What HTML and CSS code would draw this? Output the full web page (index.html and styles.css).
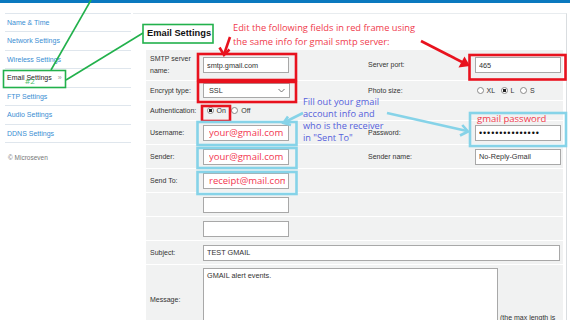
FILE: index.html
```html
<!DOCTYPE html>
<html lang="en">
<head>
  <meta charset="UTF-8">
  <meta name="viewport" content="width=device-width, initial-scale=1.0">
  <title>Email Settings</title>
  <link rel="stylesheet" href="styles.css">
</head>
<body>

  <div class="topbar"></div>

  <div class="page">
    <!-- left menu -->
    <div class="sidebar">
      <ul class="nav">
        <li>Name &amp; Time</li>
        <li>Network Settings</li>
        <li>Wireless Settings</li>
        <li class="active">Email Settings <span class="raquo">&raquo;</span></li>
        <li>FTP Settings</li>
        <li>Audio Settings</li>
        <li>DDNS Settings</li>
      </ul>
      <p class="copy">&copy; Microseven</p>
    </div>

    <!-- settings form -->
    <div class="main">
      <h2>Email Settings</h2>
      <table class="form">
        <colgroup>
          <col style="width:54px">
          <col style="width:165px">
          <col style="width:105px">
          <col style="width:93px">
        </colgroup>
        <tr class="r-smtp">
          <td class="lab">SMTP server name:</td>
          <td class="val"><input class="txt" value="smtp.gmail.com"></td>
          <td class="lab2">Server port:</td>
          <td class="val2"><input class="txt" value="465"></td>
        </tr>
        <tr class="r-20">
          <td class="lab">Encrypt type:</td>
          <td class="val">
            <div class="sel">SSL
              <svg width="7" height="5" viewBox="0 0 7 5"><path d="M0.5 1 L3.5 4 L6.5 1" fill="none" stroke="#666" stroke-width="0.9"/></svg>
            </div>
          </td>
          <td class="lab2">Photo size:</td>
          <td class="val2 radios">
            <span class="radio"></span><span class="opt">XL</span>
            <span class="radio on"></span><span class="opt">L</span>
            <span class="radio"></span><span class="opt">S</span>
          </td>
        </tr>
        <tr class="r-20">
          <td class="lab">Authentication:</td>
          <td class="val radios auth" colspan="3">
            <span class="radio on"></span><span class="opt">On</span>
            <span class="radio"></span><span class="opt">Off</span>
          </td>
        </tr>
        <tr class="r-24">
          <td class="lab">Username:</td>
          <td class="val"><input class="txt mine" value="your@gmail.com"></td>
          <td class="lab2">Password:</td>
          <td class="val2"><input class="txt dots" value="•••••••••••••••"></td>
        </tr>
        <tr class="r-24">
          <td class="lab">Sender:</td>
          <td class="val"><input class="txt mine" value="your@gmail.com"></td>
          <td class="lab2">Sender name:</td>
          <td class="val2"><input class="txt" value="No-Reply-Gmail"></td>
        </tr>
        <tr class="r-24">
          <td class="lab">Send To:</td>
          <td class="val" colspan="3"><input class="txt mine" value="receipt@mail.com"></td>
        </tr>
        <tr class="r-24">
          <td class="lab"></td>
          <td class="val" colspan="3"><input class="txt" value=""></td>
        </tr>
        <tr class="r-24">
          <td class="lab"></td>
          <td class="val" colspan="3"><input class="txt" value=""></td>
        </tr>
        <tr class="r-24">
          <td class="lab">Subject:</td>
          <td class="val" colspan="3"><input class="txt wide" value="TEST GMAIL"></td>
        </tr>
        <tr class="r-msg">
          <td class="lab">Message:</td>
          <td class="val msg" colspan="3"><textarea class="area">GMAIL alert events.</textarea><span class="hint">(the max length is</span></td>
        </tr>
      </table>
    </div>
  </div>

  <!-- hand-drawn notes on top of the screenshot -->
  <svg class="marks" width="570" height="320" viewBox="0 0 570 320">
    <g fill="none" stroke="#22b14c" stroke-width="1.6">
      <line x1="91" y1="0" x2="51" y2="70"/>
      <rect x="3.5" y="70.5" width="62" height="17"/>
      <line x1="66" y1="80" x2="143" y2="33"/>
      <rect x="143" y="24.5" width="70" height="18.5"/>
    </g>
    <g fill="none" stroke="#e8121e" stroke-width="2.6">
      <rect x="198" y="54" width="98" height="26"/>
      <rect x="198" y="82" width="98" height="20"/>
      <rect x="469.5" y="55" width="96" height="24.5"/>
      <rect x="202" y="106" width="28" height="15"/>
      <line x1="230" y1="37" x2="224.5" y2="53"/>
      <polyline points="219.5,47.5 224,55 229.5,49.5"/>
      <line x1="421" y1="41" x2="462" y2="62"/>
    </g>
    <polygon points="470,66 458.5,67.5 464.5,56.5" fill="#e8121e"/>
    <g fill="none" stroke="#86d3e8" stroke-width="2.6">
      <rect x="197.5" y="122" width="99" height="23"/>
      <rect x="197.5" y="148" width="99" height="20"/>
      <rect x="197.5" y="172" width="99" height="22"/>
      <rect x="470" y="113" width="96" height="33"/>
      <line x1="303" y1="113" x2="284" y2="122.5"/>
      <polyline points="291,125 283.5,123 288,116.5"/>
      <line x1="387" y1="113" x2="467" y2="131"/>
      <polyline points="460,135.5 468,131.5 462.3,125"/>
    </g>
  </svg>

  <div class="say red-say">Edit the following fields in red frame using<br>the same info for gmail smtp server:</div>
  <div class="say blue-say">Fill out your gmail<br>account info and<br>who is the receiver<br>in "Sent To"</div>
  <div class="say pass-say">gmail password</div>
  <div class="say tag">#2</div>

</body>
</html>
```

FILE: styles.css
```css
body {
  margin: 0;
  width: 570px;
  height: 320px;
  overflow: hidden;
  position: relative;
  font-family: "Liberation Sans", Arial, sans-serif;
  font-size: 7px;
  color: #333;
  background-color: #fff;
}
.topbar {
  height: 3px;
  background-color: #0b79bf;
}
.page {
  display: flex;
  width: 567px;
  padding-top: 10px;
}

/* menu */
.sidebar {
  flex: 0 0 133px;
}
.nav {
  list-style: none;
  margin: 0 2px 0 5px;
  padding: 0;
  border-top: 1px solid #dfe6ed;
}
.nav li {
  height: 17.45px;
  line-height: 17.45px;
  padding-left: 2px;
  border-bottom: 1px solid #dfe6ed;
  color: #3b8ed3;
}
.nav li.active {
  color: #222;
}
.nav .raquo {
  color: #999;
  margin-left: 4px;
}
.copy {
  margin: 11px 0 0 8px;
  font-size: 6.5px;
  color: #777;
}

/* main panel */
.main {
  flex: 0 0 434px;
  box-sizing: border-box;
  padding: 0 3px 0 13px;
  border-top: 1px solid #e8ecef;
  border-right: 1px solid #d9dde0;
  height: 320px;
}
.main h2 {
  margin: 14px 0 11px 1px;
  font-size: 9.3px;
  line-height: 11px;
  color: #111;
}
.form {
  width: 417px;
  table-layout: fixed;
  border-collapse: separate;
  border-spacing: 0;
  background-color: #f1f2f2;
}
.form td {
  padding: 0;
  line-height: 12px;
  vertical-align: middle;
  border-bottom: 1px solid #fff;
}
.form td.lab {
  padding-left: 4px;
}
.form td.val {
  padding-left: 3px;
}
.form td.lab2 {
  padding-left: 3px;
}
.form td.val2 {
  padding-left: 5px;
}
.r-smtp { height: 31px; }
.r-20 { height: 20px; }
.r-24 { height: 24px; }
.r-msg { height: 70px; }

.txt {
  box-sizing: border-box;
  width: 86px;
  height: 16px;
  margin: 0;
  padding: 0 3px;
  border: 1px solid #a8a8a8;
  background-color: #fff;
  font-family: "Liberation Sans", Arial, sans-serif;
  font-size: 7.3px;
  color: #333;
  vertical-align: middle;
  outline: none;
}
.txt.mine {
  padding-left: 5px;
  font-family: "Open Sans", sans-serif;
  font-size: 9.5px;
  color: #f2364f;
}
.txt.dots {
  font-size: 9px;
  letter-spacing: 0.9px;
  color: #111;
}
.txt.wide {
  width: 357px;
}
.sel {
  display: flex;
  align-items: center;
  justify-content: space-between;
  box-sizing: border-box;
  width: 87px;
  height: 15px;
  padding: 0 4px 0 5px;
  border: 1px solid #a8a8a8;
  background-color: #fff;
  font-size: 7.3px;
}
.radios {
  white-space: nowrap;
}
.radio {
  display: inline-block;
  box-sizing: border-box;
  width: 7px;
  height: 7px;
  margin: 0 3px 0 1.5px;
  border: 1px solid #8a8a8a;
  border-radius: 50%;
  background-color: #fff;
  vertical-align: middle;
}
.radio.on {
  background: radial-gradient(circle, #222 0 1.5px, #fff 2px);
}
.opt {
  margin-right: 2px;
  vertical-align: middle;
}
.auth {
  padding-left: 5px !important;
}
.msg {
  vertical-align: top !important;
  padding-top: 3px !important;
}
.area {
  box-sizing: border-box;
  width: 295px;
  height: 56px;
  margin: 0;
  padding: 2px 3px;
  border: 1px solid #a8a8a8;
  font-family: "Liberation Sans", Arial, sans-serif;
  font-size: 7.3px;
  color: #333;
  resize: none;
  vertical-align: bottom;
}
.hint {
  margin-left: 2px;
  font-size: 7px;
}

/* notes over the screenshot */
.marks {
  position: absolute;
  left: 0;
  top: 0;
  pointer-events: none;
}
.say {
  position: absolute;
  font-family: "Open Sans", sans-serif;
  white-space: nowrap;
}
.red-say {
  left: 233px;
  top: 21px;
  font-size: 9.3px;
  line-height: 14px;
  color: #f03a4c;
}
.blue-say {
  left: 303px;
  top: 96px;
  font-size: 9.2px;
  line-height: 12px;
  color: #5560dc;
}
.pass-say {
  left: 477px;
  top: 112px;
  font-size: 9.5px;
  line-height: 14px;
  color: #f03a4c;
}
.tag {
  left: 25px;
  top: 76px;
  font-size: 8px;
  line-height: 10px;
  color: #4cc06a;
}
```
